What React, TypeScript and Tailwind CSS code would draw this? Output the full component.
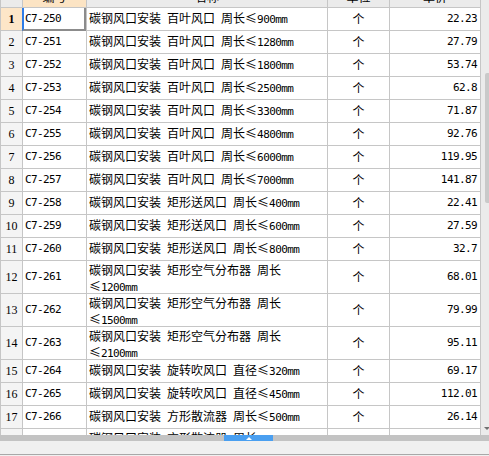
import React from "react"

interface Item {
  no: number
  code: string
  name: string[]
  unit: string
  price: string
}

const rows: Item[] = [
  { no: 1, code: "C7-250", name: ["碳钢风口安装 百叶风口 周长≤900mm"], unit: "个", price: "22.23" },
  { no: 2, code: "C7-251", name: ["碳钢风口安装 百叶风口 周长≤1280mm"], unit: "个", price: "27.79" },
  { no: 3, code: "C7-252", name: ["碳钢风口安装 百叶风口 周长≤1800mm"], unit: "个", price: "53.74" },
  { no: 4, code: "C7-253", name: ["碳钢风口安装 百叶风口 周长≤2500mm"], unit: "个", price: "62.8" },
  { no: 5, code: "C7-254", name: ["碳钢风口安装 百叶风口 周长≤3300mm"], unit: "个", price: "71.87" },
  { no: 6, code: "C7-255", name: ["碳钢风口安装 百叶风口 周长≤4800mm"], unit: "个", price: "92.76" },
  { no: 7, code: "C7-256", name: ["碳钢风口安装 百叶风口 周长≤6000mm"], unit: "个", price: "119.95" },
  { no: 8, code: "C7-257", name: ["碳钢风口安装 百叶风口 周长≤7000mm"], unit: "个", price: "141.87" },
  { no: 9, code: "C7-258", name: ["碳钢风口安装 矩形送风口 周长≤400mm"], unit: "个", price: "22.41" },
  { no: 10, code: "C7-259", name: ["碳钢风口安装 矩形送风口 周长≤600mm"], unit: "个", price: "27.59" },
  { no: 11, code: "C7-260", name: ["碳钢风口安装 矩形送风口 周长≤800mm"], unit: "个", price: "32.7" },
  { no: 12, code: "C7-261", name: ["碳钢风口安装 矩形空气分布器 周长", "≤1200mm"], unit: "个", price: "68.01" },
  { no: 13, code: "C7-262", name: ["碳钢风口安装 矩形空气分布器 周长", "≤1500mm"], unit: "个", price: "79.99" },
  { no: 14, code: "C7-263", name: ["碳钢风口安装 矩形空气分布器 周长", "≤2100mm"], unit: "个", price: "95.11" },
  { no: 15, code: "C7-264", name: ["碳钢风口安装 旋转吹风口 直径≤320mm"], unit: "个", price: "69.17" },
  { no: 16, code: "C7-265", name: ["碳钢风口安装 旋转吹风口 直径≤450mm"], unit: "个", price: "112.01" },
  { no: 17, code: "C7-266", name: ["碳钢风口安装 方形散流器 周长≤500mm"], unit: "个", price: "26.14" },
  { no: 18, code: "C7-267", name: ["碳钢风口安装 方形散流器 周长", "≤800mm"], unit: "个", price: "38.52" },
]

const mono = "font-['DejaVu_Sans_Mono',monospace] text-[11px] tracking-[-0.6px]"

// ascii runs get the narrow mono face, the rest stays CJK
function Mixed({ text }: { text: string }) {
  const parts = text.split(/([\x20-\x7e]+)/).filter((p) => p !== "")
  return (
    <>
      {parts.map((p, i) =>
        /^[\x20-\x7e]+$/.test(p) ? (
          <span key={i} className={`${mono} whitespace-pre`}>
            {p}
          </span>
        ) : (
          <span key={i}>{p}</span>
        )
      )}
    </>
  )
}

const cell = "shrink-0 border-r border-[#c6c6c6] h-full"

export default function App() {
  return (
    <div className="w-[489px] h-[456px] overflow-hidden flex flex-col bg-[#f0f0f0] text-black font-['Noto_Sans_CJK_SC',sans-serif] text-[12px]">
      <div className="flex h-[435px] shrink-0">
        {/* grid */}
        <div className="w-[481px] h-full overflow-hidden bg-white">
          {/* header, scrolled mostly out of view */}
          <div className="flex h-[22px] -mt-[14px] border-b border-[#c6c6c6] bg-[#ebebeb] leading-[21px]">
            <div className={`${cell} w-[23px] border-l`} />
            <div className={`${cell} w-[64px] bg-[#fce4c4] text-center`}>编号</div>
            <div className={`${cell} w-[241px] text-center`}>名称</div>
            <div className={`${cell} w-[62px] text-center`}>单位</div>
            <div className={`${cell} w-[91px] text-center`}>单价</div>
          </div>

          {rows.map((r) => {
            const tall = r.name.length > 1
            const first = r.no === 1
            return (
              <div
                key={r.no}
                className={`flex border-b border-[#c6c6c6] ${tall ? "h-[33px]" : "h-[23px]"}`}
              >
                <div
                  className={`${cell} w-[23px] border-l flex items-center justify-center font-['Liberation_Serif',serif] text-[12px] ${
                    first ? "bg-[#fde6c8] font-bold" : "bg-[#f4f4f4]"
                  }`}
                >
                  {r.no}
                </div>
                <div className={`${cell} w-[64px] relative flex items-center pl-[2px]`}>
                  <span className={mono}>{r.code}</span>
                  {first && (
                    <div className="absolute top-0 -left-px right-0 -bottom-px border-l-2 border-l-[#2f7de8] border-r-2 border-b-2 border-r-[#8c8c8c] border-b-[#8c8c8c]" />
                  )}
                </div>
                <div
                  className={`${cell} w-[241px] pl-[2px] whitespace-nowrap flex flex-col ${
                    tall ? "pt-[2px] leading-[14px]" : "justify-center leading-[16px]"
                  }`}
                >
                  {r.name.map((line, i) => (
                    <div key={i}>
                      <Mixed text={line} />
                    </div>
                  ))}
                </div>
                <div className={`${cell} w-[62px] flex items-center justify-center`}>{r.unit}</div>
                <div className={`${cell} w-[91px] flex items-center justify-end pr-[3px]`}>
                  <span className={mono}>{r.price}</span>
                </div>
              </div>
            )
          })}
        </div>

        {/* vertical scrollbar */}
        <div className="w-[8px] h-full bg-[#ebebeb] flex flex-col pl-[4px]">
          <div className="h-[73px] shrink-0" />
          <div className="h-[130px] w-full bg-[#c9c9c9] rounded-l-[2px]" />
          <div className="flex-1" />
          <div className="mb-[5px] -ml-[1px] w-0 h-0 border-l-[3px] border-r-[3px] border-t-[3px] border-l-transparent border-r-transparent border-t-[#707070]" />
        </div>
      </div>

      {/* horizontal scrollbar */}
      <div className="h-[6px] shrink-0 bg-[#c3c3c3] flex">
        <div className="ml-[224px] w-[49px] h-full bg-[#4a9ff0] flex items-center justify-center">
          <div className="w-0 h-0 border-l-[3px] border-r-[3px] border-b-[3px] border-l-transparent border-r-transparent border-b-white" />
        </div>
      </div>

      <div className="h-[14px] shrink-0 bg-[#f0f0f0] border-b border-[#a8a8a8]" />
    </div>
  )
}
